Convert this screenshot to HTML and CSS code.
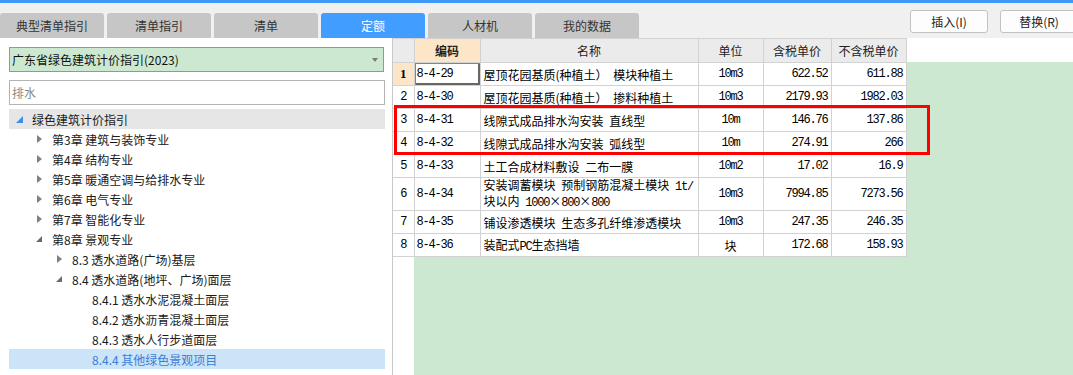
FILE: index.html
```html
<!DOCTYPE html>
<html lang="zh-CN">
<head>
    <meta charset="UTF-8">
    <title>定额</title>
    <link rel="stylesheet" href="styles.css">
</head>
<body>
    <div class="topbar">
        <div class="tabs">
            <div class="tab">典型清单指引</div>
            <div class="tab">清单指引</div>
            <div class="tab">清单</div>
            <div class="tab active">定额</div>
            <div class="tab">人材机</div>
            <div class="tab">我的数据</div>
        </div>
        <div class="actions">
            <button class="btn">插入(I)</button>
            <button class="btn">替换(R)</button>
        </div>
    </div>

    <div class="main">
        <aside class="side">
            <div class="select">广东省绿色建筑计价指引(2023)<span class="caret"></span></div>
            <div class="search">排水</div>
            <ul class="tree">
                <li class="lv0 root"><span class="tw"><svg width="7" height="7"><polygon points="7,0 7,7 0,7" fill="#3d8ee8"/></svg></span>绿色建筑计价指引</li>
                <li class="lv1"><span class="tw"><svg width="5" height="8"><polygon points="0,0 5,4 0,8" fill="#808080"/></svg></span>第3章 建筑与装饰专业</li>
                <li class="lv1"><span class="tw"><svg width="5" height="8"><polygon points="0,0 5,4 0,8" fill="#808080"/></svg></span>第4章 结构专业</li>
                <li class="lv1"><span class="tw"><svg width="5" height="8"><polygon points="0,0 5,4 0,8" fill="#808080"/></svg></span>第5章 暖通空调与给排水专业</li>
                <li class="lv1"><span class="tw"><svg width="5" height="8"><polygon points="0,0 5,4 0,8" fill="#808080"/></svg></span>第6章 电气专业</li>
                <li class="lv1"><span class="tw"><svg width="5" height="8"><polygon points="0,0 5,4 0,8" fill="#808080"/></svg></span>第7章 智能化专业</li>
                <li class="lv1"><span class="tw"><svg width="6" height="6"><polygon points="6,0 6,6 0,6" fill="#6b6b6b"/></svg></span>第8章 景观专业</li>
                <li class="lv2"><span class="tw"><svg width="5" height="8"><polygon points="0,0 5,4 0,8" fill="#808080"/></svg></span>8.3 透水道路(广场)基层</li>
                <li class="lv2"><span class="tw"><svg width="6" height="6"><polygon points="6,0 6,6 0,6" fill="#6b6b6b"/></svg></span>8.4 透水道路(地坪、广场)面层</li>
                <li class="lv3"><span class="tw"></span>8.4.1 透水水泥混凝土面层</li>
                <li class="lv3"><span class="tw"></span>8.4.2 透水沥青混凝土面层</li>
                <li class="lv3"><span class="tw"></span>8.4.3 透水人行步道面层</li>
                <li class="lv3 sel"><span class="tw"></span>8.4.4 其他绿色景观项目</li>
            </ul>
        </aside>

        <section class="grid-area">
            <table class="grid">
                <colgroup>
                    <col style="width:21px">
                    <col style="width:66px">
                    <col style="width:218px">
                    <col style="width:65px">
                    <col style="width:68px">
                    <col style="width:75px">
                </colgroup>
                <thead>
                    <tr>
                        <th class="rn"></th>
                        <th class="hl">编码</th>
                        <th>名称</th>
                        <th>单位</th>
                        <th>含税单价</th>
                        <th>不含税单价</th>
                    </tr>
                </thead>
                <tbody>
                    <tr>
                        <td class="rn cur">1</td>
                        <td class="code m focus">8-4-29</td>
                        <td class="name">屋顶花园基质(种植土） 模块种植土</td>
                        <td class="unit m">10m3</td>
                        <td class="num m">622.52</td>
                        <td class="num m">611.88</td>
                    </tr>
                    <tr>
                        <td class="rn m">2</td>
                        <td class="code m">8-4-30</td>
                        <td class="name">屋顶花园基质(种植土） 掺料种植土</td>
                        <td class="unit m">10m3</td>
                        <td class="num m">2179.93</td>
                        <td class="num m">1982.03</td>
                    </tr>
                    <tr>
                        <td class="rn m">3</td>
                        <td class="code m">8-4-31</td>
                        <td class="name">线隙式成品排水沟安装 直线型</td>
                        <td class="unit m">10m</td>
                        <td class="num m">146.76</td>
                        <td class="num m">137.86</td>
                    </tr>
                    <tr>
                        <td class="rn m">4</td>
                        <td class="code m">8-4-32</td>
                        <td class="name">线隙式成品排水沟安装 弧线型</td>
                        <td class="unit m">10m</td>
                        <td class="num m">274.91</td>
                        <td class="num m">266</td>
                    </tr>
                    <tr>
                        <td class="rn m">5</td>
                        <td class="code m">8-4-33</td>
                        <td class="name">土工合成材料敷设 二布一膜</td>
                        <td class="unit m">10m2</td>
                        <td class="num m">17.02</td>
                        <td class="num m">16.9</td>
                    </tr>
                    <tr class="tall">
                        <td class="rn m">6</td>
                        <td class="code m">8-4-34</td>
                        <td class="name two">安装调蓄模块 预制钢筋混凝土模块 <span class="m">1t/</span><br>块以内 <span class="m">1000</span>×<span class="m">800</span>×<span class="m">800</span></td>
                        <td class="unit m">10m3</td>
                        <td class="num m">7994.85</td>
                        <td class="num m">7273.56</td>
                    </tr>
                    <tr>
                        <td class="rn m">7</td>
                        <td class="code m">8-4-35</td>
                        <td class="name">铺设渗透模块 生态多孔纤维渗透模块</td>
                        <td class="unit m">10m3</td>
                        <td class="num m">247.35</td>
                        <td class="num m">246.35</td>
                    </tr>
                    <tr>
                        <td class="rn m">8</td>
                        <td class="code m">8-4-36</td>
                        <td class="name">装配式<span class="m">PC</span>生态挡墙</td>
                        <td class="unit">块</td>
                        <td class="num m">172.68</td>
                        <td class="num m">158.93</td>
                    </tr>
                </tbody>
            </table>
            <div class="mark"></div>
        </section>
    </div>
</body>
</html>
```

FILE: styles.css
```css
* {
    box-sizing: border-box;
}
body {
    margin: 0;
    width: 1073px;
    height: 375px;
    overflow: hidden;
    background: #f0f0f0;
    font-family: "Noto Sans CJK SC", "Noto Sans", sans-serif;
    font-size: 12px;
    color: #1e1e1e;
}
.topbar {
    display: flex;
    align-items: flex-start;
    height: 38px;
    border-top: 3px solid #3f9af7;
    background: #f0f0f0;
}
.tabs {
    display: flex;
    gap: 3px;
    margin-top: 10px;
}
.tab {
    width: 104px;
    height: 25px;
    line-height: 25px;
    text-align: center;
    background: #c6c6c6;
    border-radius: 3px 3px 0 0;
    color: #333;
}
.tab.active {
    background: #419dff;
    color: #fff;
}
.actions {
    display: flex;
    gap: 12px;
    margin-left: auto;
    margin-top: 7px;
    margin-right: -5px;
}
.btn {
    width: 78px;
    height: 23px;
    padding: 0;
    background: #fdfdfd;
    border: 1px solid #c2c2c2;
    border-radius: 3px;
    font: inherit;
    color: #222;
}
.main {
    display: flex;
    height: 337px;
}
.side {
    width: 393px;
    flex: none;
    padding: 9px 0 0 9px;
    background: #fff;
    border-right: 1px solid #c9c9c9;
}
.select {
    position: relative;
    width: 375px;
    height: 25px;
    padding-left: 2px;
    line-height: 23px;
    background: #cde8d0;
    border: 1px solid #5da2ea;
    color: #111;
}
.caret {
    position: absolute;
    right: 5px;
    top: 10px;
    border-left: 3.5px solid transparent;
    border-right: 3.5px solid transparent;
    border-top: 4px solid #7a7a7a;
}
.search {
    width: 376px;
    height: 25px;
    margin-top: 8px;
    padding-left: 2px;
    line-height: 23px;
    border: 1px solid #b4b4b4;
    color: #8a8a8a;
}
.tree {
    list-style: none;
    margin: 4px 0 0;
    padding: 0;
    width: 376px;
}
.tree li {
    display: flex;
    align-items: center;
    height: 20px;
    white-space: nowrap;
    color: #1a1a1a;
}
.tw {
    display: flex;
    align-items: center;
    justify-content: center;
    width: 14px;
    height: 20px;
    margin-right: 6px;
    flex: none;
}
.lv0 { padding-left: 3px; }
.lv1 { padding-left: 23px; }
.lv2 { padding-left: 43px; }
.lv3 { padding-left: 63px; }
.tree .root {
    background: #e6e6e6;
}
.tree .sel {
    background: #cce4f7;
    color: #3b7ed6;
}

/* grid */
.grid-area {
    position: relative;
    flex: 1;
    background:
        linear-gradient(#fff, #fff) 0 0 / 100% 24px no-repeat,
        linear-gradient(#fff, #fff) 0 0 / 21px 100% no-repeat,
        #cde8d0;
}
.grid {
    border-collapse: collapse;
    table-layout: fixed;
    width: 513px;
}
.grid th,
.grid td {
    padding: 0;
    border: 1px solid #d2d2d2;
    white-space: nowrap;
    overflow: hidden;
    vertical-align: middle;
    background: #fff;
    color: #000;
}
.grid tr {
    height: 23px;
}
.grid thead tr {
    height: 24px;
}
.grid tr.tall {
    height: 33px;
}
.grid th {
    background: #ebebeb;
    font-weight: normal;
    color: #222;
    text-align: center;
}
.grid th.hl {
    background: #fde6c8;
    font-weight: bold;
}
.grid tr > :first-child {
    border-left: 0;
}
.m {
    font-family: "Liberation Mono", monospace;
    font-size: 12px;
    letter-spacing: -1.2px;
}
.rn {
    text-align: center;
}
.grid td.cur {
    background: #fde6c8;
    font-family: "Liberation Serif", serif;
    font-weight: bold;
    font-size: 13px;
}
.code {
    padding-left: 2px !important;
}
.grid td.focus {
    box-shadow: inset 1px 1px 0 #4a90e2, inset -2px -2px 0 #666;
}
.name {
    padding-left: 3px !important;
    word-spacing: 3px;
}
.name.two {
    line-height: 13px;
}
.unit {
    text-align: center;
}
.num {
    text-align: right;
    padding-right: 3px !important;
}
.mark {
    position: absolute;
    left: 1px;
    top: 67px;
    width: 536px;
    height: 50px;
    border: 3px solid #f00;
}
```
